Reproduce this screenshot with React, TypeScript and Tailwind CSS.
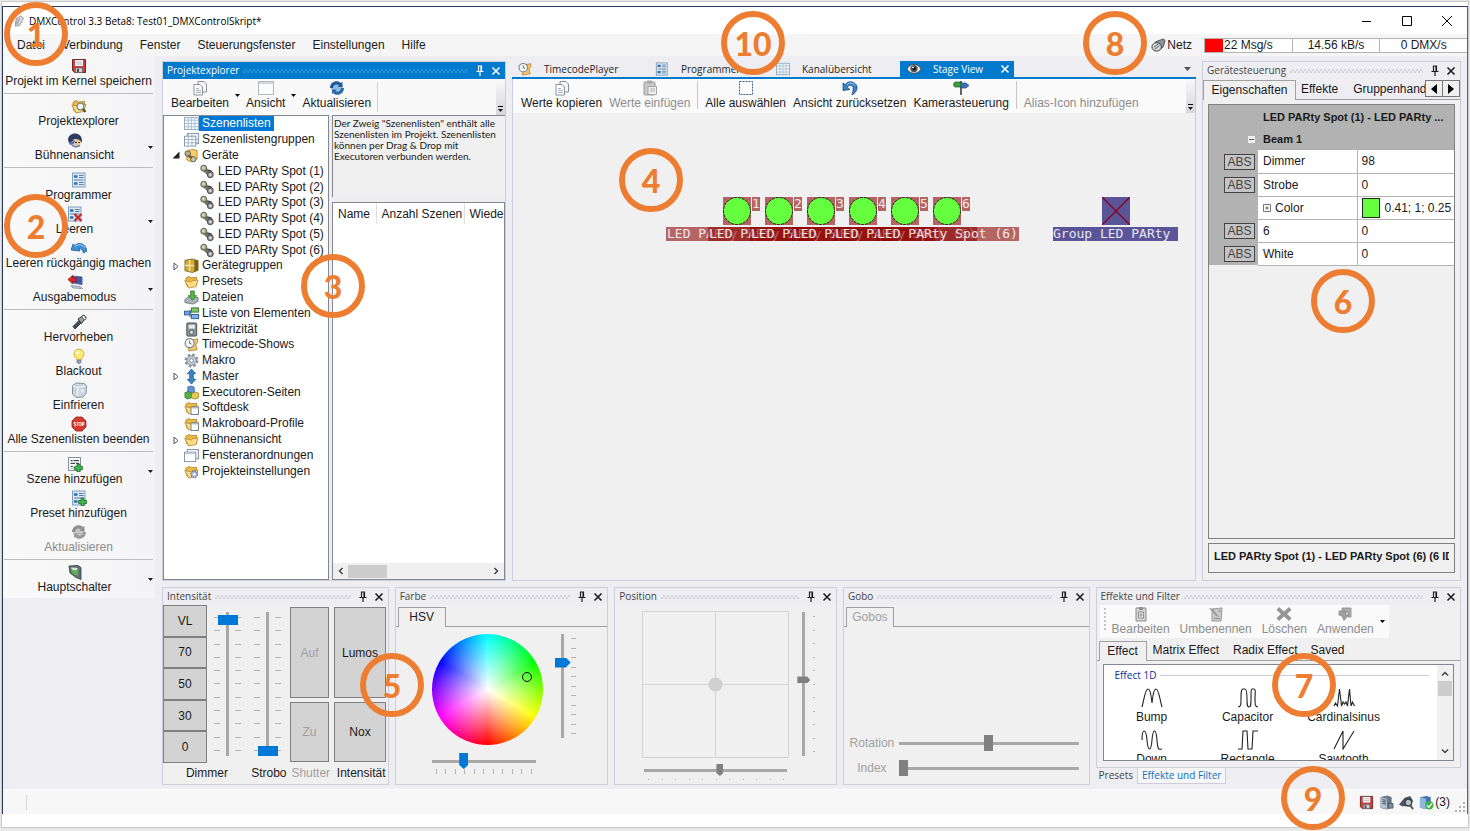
import React from "react";
import type { ReactNode } from "react";

const folder = (
  <>
    <path d="M2 4.500 5 2.500l2.500 1.500 6-.5v9l-9 1.500-2-2z" fill="#e9b949" stroke="#a87a1e" strokeWidth=".8" />
    <path d="m.8 7 7 1.500L9.500 7l5.500-.5-2.500 7-7.500 1.500z" fill="#fbdc86" stroke="#b3842a" strokeWidth=".8" />
  </>
);
const sheet = (
  <>
    <rect x="1.500" y="1.500" width="12" height="13" fill="#fafafa" stroke="#8a8f98" />
    <path d="M3.500 4.500h2M6.500 4.500H12M3.500 7.500H8M9 7.500h3M3.500 10.500H6" stroke="#3f4954" />
    <path d="M3.500 6H12M3.500 12.500H7" stroke="#9aa3ad" strokeWidth=".8" />
  </>
);
const blueSheet = (
  <>
    <rect x="1.500" y="1" width="12.500" height="14" fill="#d9e9f7" stroke="#7f9fbf" />
    <path d="M3 4.500h3.500M3 11.500h3.500" stroke="#2f6fb0" strokeWidth="2.500" />
    <path d="M8 3.500h4.500M8 5.500h4.500M8 10.500h4.500M8 12.500h4.500M3 8h9.500" stroke="#5b7fa6" />
  </>
);
const plus = <path d="M10 8h3v2.500h2.500v3H13V16h-3v-2.500H7.500v-3H10z" fill="#3fb54a" stroke="#1d7328" strokeWidth=".8" />;
const server = (
  <>
    <path d="M2 2.500 9 1l4 1.500v11L8 15l-6-1.500z" fill="#66788c" stroke="#46566a" strokeWidth=".6" />
    <path d="m2 2.500 6.500 1.500V15L2 13.500z" fill="#b3c0cd" />
    <path d="m3.500 5 4 .7M3.500 7l4 .7M3.500 9l4 .7" stroke="#39495a" />
    <path d="M10 9h5v5h-5z" fill="#7c8b99" stroke="#3d4954" strokeWidth=".7" />
  </>
);
const winBox = (
  <>
    <rect x="7.500" y="7.500" width="8" height="8" fill="#fff" stroke="#6f7f90" />
    <path d="M7.500 8.500h8" stroke="#9fb4c8" />
  </>
);

const ICONS: Record<string, ReactNode> = {
  save: (
    <>
      <path d="M1.500 1.500h13v13h-11l-2-2z" fill="#c9403c" stroke="#6e2626" />
      <rect x="4" y="2" width="8" height="6" fill="#f0f4f8" />
      <path d="M5 4h6M5 6h6" stroke="#b9c3cc" />
      <rect x="4.500" y="10" width="7" height="4.500" fill="#cfd6dc" stroke="#55606a" strokeWidth=".7" />
      <rect x="6" y="11" width="2" height="3" fill="#434c55" />
    </>
  ),
  folderSearch: (
    <>
      {folder}
      <circle cx="9.500" cy="8.500" r="3.300" fill="#eaf4fb" stroke="#7b8691" strokeWidth="1.200" />
      <path d="m12 11 2.500 3" stroke="#5c4a2a" strokeWidth="2" />
    </>
  ),
  stage: (
    <>
      <path d="M4 8c1-3 9-3 10 1l-1 5-6 1-3-2z" fill="#e8c69c" />
      <path d="M1 8c0-8 13-9 14 0v3c-2-4-5-4-8-4-1 2-3 4-5 4z" fill="#2f3d66" />
      <path d="M2 11c2 0 4-1 5-3l1 1c-1 3-3 4-5 4z" fill="#4f6fb4" />
      <path d="M8 10.500h2M11.500 10.500h1.500" stroke="#3c2f22" />
      <path d="m5 13.500 4 1.500 4-1.500" stroke="#6f83b5" strokeWidth="1.500" fill="none" />
    </>
  ),
  programmer: blueSheet,
  clear: (
    <>
      {blueSheet}
      <path d="m7.500 8 7 7M14.500 8l-7 7" stroke="#c62828" strokeWidth="2.200" />
    </>
  ),
  undo: (
    <>
      <path d="M0 10 2 4l2 1.500C8 1 15 4 16 11l-3.500 2c-1-3-2-4.500-4.500-4.500L9 11z" fill="#3f8fd6" stroke="#235f9c" strokeWidth=".8" />
      <path d="M4 6.500C8 3.500 12 4.500 14 8" stroke="#a9d3f5" fill="none" />
    </>
  ),
  output: (
    <>
      <path d="M5 2 15 3v7.500L6 9z" fill="#3859b8" stroke="#5b6880" />
      <path d="m4 11.500 9 1 2.500 2-9.500-.5z" fill="#c7cdd8" stroke="#717b8c" strokeWidth=".7" />
      <path d="m1 5.500 4.500-4V4h4v3.500h-4V10z" fill="#d9272e" stroke="#8b1016" strokeWidth=".7" />
    </>
  ),
  torch: (
    <>
      <path d="m2 12.500 6-6L10 9l-6 6z" fill="#4a4f55" stroke="#1e2124" strokeWidth=".8" />
      <path d="m7 5 6-4 2 2.500-4.500 6z" fill="#9aa2aa" stroke="#23272b" strokeWidth=".9" />
      <ellipse cx="13" cy="3.500" rx="1.500" ry="2.600" transform="rotate(-38 13 3.500)" fill="#edf1f4" stroke="#33383d" strokeWidth=".7" />
    </>
  ),
  bulb: (
    <>
      <path d="M8 1a5 5 0 0 0-3 9l1 2h4l1-2A5 5 0 0 0 8 1" fill="#ffe978" stroke="#c9a227" strokeWidth=".8" />
      <circle cx="6.500" cy="4.500" r="1.600" fill="#fffbe0" />
      <path d="M6 12h4v2.500l-1 1H7l-1-1z" fill="#9aa3ab" stroke="#6a7178" strokeWidth=".6" />
    </>
  ),
  ice: (
    <>
      <path d="m1.500 3.500 4-2.500 8 .5 2 2.500-.5 7.500-3 3.500-7 .500L1.500 12z" fill="#c9d6df" stroke="#7c8b97" strokeWidth=".9" />
      <path d="m2 4 5 1.500 7.500-1.500M7 5.500 6.500 14" stroke="#f4f8fa" fill="none" strokeWidth="1.200" />
      <path d="m9 8 3.500-1v4z" fill="#eef4f7" />
    </>
  ),
  stop: (
    <>
      <path d="M5 1h6l4 4v6l-4 4H5l-4-4V5z" fill="#d63a2f" stroke="#941f18" strokeWidth=".8" />
      <path d="M4.800 6.500H3v1.500h1.800v1.700H3M5.700 6.500h2M6.700 6.500v3.400M8.700 6.500h1.500v3H8.700zM11.500 10V6.500H13v2h-1.500" stroke="#fff" strokeWidth=".8" fill="none" />
    </>
  ),
  sceneAdd: <>{sheet}{plus}</>,
  presetAdd: <>{blueSheet}{plus}</>,
  refreshGray: (
    <>
      <circle cx="8" cy="8" r="6" fill="#c4c4c4" />
      <path d="M1 8c0-6 7-9 11-5l1.500-1V7H8.500L10 5.500C7 3.500 4.500 5 4 8z" fill="#8f8f8f" />
      <path d="M15 8c0 6-7 9-11 5l-1 1V9.500h5L6.500 11c2.500 1.500 5 .5 5.500-3z" fill="#9b9b9b" />
    </>
  ),
  refresh: (
    <>
      <circle cx="8" cy="8" r="6" fill="#8fc0e4" />
      <path d="M1 8c0-6 7-9 11-5l1.500-1V7H8.500L10 5.500C7 3.500 4.500 5 4 8z" fill="#1d5c99" />
      <path d="M15 8c0 6-7 9-11 5l-1 1V9.500h5L6.500 11c2.500 1.500 5 .5 5.500-3z" fill="#2a6cab" />
    </>
  ),
  mainSwitch: (
    <>
      <path d="m2 2 9-.5 3 2v12L9 13.500 3 9z" fill="#5f6f78" stroke="#333d44" strokeWidth=".8" />
      <path d="m4 3.500 7 .5v8L7 10.500 4.500 8z" fill="#5fae54" />
      <path d="m4 3.500 7 .5-2 2.500-4-1z" fill="#cfeec8" />
    </>
  ),
  copy: (
    <>
      <path d="M6 1.500h6l2.500 2.500v8H6z" fill="#f5f6f8" stroke="#8b929b" />
      <path d="M2 4.500h6l2.500 2.500v8H2z" fill="#fff" stroke="#8b929b" />
      <path d="M4 8.500h3M4 10.500h5M4 12.500h5" stroke="#a9b0b8" />
    </>
  ),
  window: (
    <>
      <rect x=".5" y="1.500" width="15" height="13" fill="#fcfcfd" stroke="#b3b9c0" />
      <path d="M1 3h14" stroke="#d3d8de" strokeWidth="2" />
    </>
  ),
  grid: (
    <>
      <rect x=".5" y="1.500" width="15" height="13" fill="#f3f8fc" stroke="#8fa8bd" />
      <path d="M1 4.500h14M1 8h14M1 11.500h14M4.500 2v12M8 2v12M11.500 2v12" stroke="#a9c1d5" />
    </>
  ),
  grids: (
    <>
      <rect x="3.500" y="1.500" width="12" height="11" fill="#f3f8fc" stroke="#8195a8" />
      <rect x=".5" y="4.500" width="12" height="10.500" fill="#fff" stroke="#8195a8" />
      <path d="M1 8h14M1 11.500h14M4.500 2v13M8.500 2v13M12.500 4v8" stroke="#9fb3c6" />
    </>
  ),
  devices: (
    <>
      <path d="M3 3.500 8 1.500l6 1v9l-8 3-3-2z" fill="#f4cf6c" stroke="#a87a1e" strokeWidth=".8" />
      <circle cx="4" cy="6" r="3" fill="#b9b093" stroke="#4c452c" strokeWidth=".8" />
      <path d="m5 7 6 3-2 3-5-4z" fill="#67654f" />
      <circle cx="10" cy="12" r="2.800" fill="#c9c4ac" stroke="#4c452c" strokeWidth=".8" />
    </>
  ),
  lamp: (
    <>
      <path d="m3 2 9 6-3 5-7-7z" fill="#77776b" />
      <circle cx="4" cy="4.500" r="3.200" fill="#b0ae96" stroke="#4d4c42" strokeWidth=".9" />
      <circle cx="3.500" cy="4" r="1.300" fill="#dedcc8" />
      <path d="M8 7c4-1 6 2 5 6" stroke="#3e4044" strokeWidth="1.300" fill="none" />
      <circle cx="11" cy="11.500" r="3.200" fill="#8f9194" stroke="#3c3e42" strokeWidth=".9" />
      <circle cx="11" cy="11.500" r="1.300" fill="#e2e3e4" />
    </>
  ),
  crate: (
    <>
      <path d="m1 2.500 8-1.500 6 2v10l-6 2.500-8-2z" fill="#d2ac3c" stroke="#6b5215" strokeWidth=".8" />
      <path d="m11 1.500 4 1.500v10l-4 2z" fill="#7f6218" />
      <path d="M6 2v12M1 8h10" stroke="#f6e29d" strokeWidth="1.500" />
    </>
  ),
  folder,
  files: (
    <>
      <path d="m1 10 4-3 10 1v4l-5 3-9-1.500z" fill="#aab4be" stroke="#5f6a75" strokeWidth=".8" />
      <path d="M7 1h4v5h2.500L9 11 4.500 6H7z" fill="#56b848" stroke="#2a7522" strokeWidth=".8" />
    </>
  ),
  list: (
    <>
      <path d="M5 7h3M6.500 4v8" stroke="#444" />
      <rect x=".5" y="5.500" width="6" height="4" fill="#6aa3df" stroke="#2b5f9e" />
      <rect x="8" y="2" width="7.500" height="4.500" fill="#7fc36a" stroke="#3b7f2b" />
      <rect x="8" y="9" width="7.500" height="4.500" fill="#7fb0e6" stroke="#2b5f9e" />
    </>
  ),
  meter: (
    <>
      <rect x="3" y="1" width="10.500" height="14" rx="1" fill="#8d9498" stroke="#454b4f" />
      <rect x="5" y="3" width="6.500" height="4" fill="#e8ecee" />
      <circle cx="8" cy="11" r="2.200" fill="#d9dee0" stroke="#3b4044" strokeWidth=".8" />
    </>
  ),
  clock: (
    <>
      <path d="M5 3.500 14.500 2v4l-2 1.500 1.500 6L5 15z" fill="#f0c76a" stroke="#a87a2a" strokeWidth=".8" />
      <circle cx="6" cy="6.500" r="4.800" fill="#f6f8fa" stroke="#80878f" strokeWidth="1.300" />
      <path d="M6 4v2.700l2 .8" stroke="#555" fill="none" />
    </>
  ),
  gear: (
    <>
      <circle cx="8" cy="8" r="6" fill="none" stroke="#8c97a2" strokeWidth="3" strokeDasharray="2.700 2" />
      <circle cx="8" cy="8" r="5" fill="#c5cdd5" stroke="#7d8893" />
      <circle cx="8" cy="8" r="2" fill="#fff" stroke="#7d8893" />
    </>
  ),
  master: <path d="m8 0 4.500 5H10v6h2.500L8 16l-4.500-5H6V5H3.500z" fill="#3c84c8" stroke="#1e568e" strokeWidth=".8" />,
  cubes: (
    <>
      <path d="m4 2 4-1 3 1.500V8L7 9 4 8z" fill="#5f96d8" stroke="#2b558c" strokeWidth=".7" />
      <path d="m1 8 4-1 3 1.500v5L4 15l-3-1.500z" fill="#58ad4d" stroke="#2a6b22" strokeWidth=".7" />
      <path d="m8 9 4-1.500 3.500 1v5L12 15l-4-1z" fill="#e6c84c" stroke="#8c7418" strokeWidth=".7" />
    </>
  ),
  folderWin: <>{folder}{winBox}</>,
  windows: (
    <>
      <rect x="3.500" y="1.500" width="12" height="10" fill="#eef2f6" stroke="#8290a0" />
      <rect x=".5" y="4.500" width="12" height="10" fill="#fff" stroke="#8290a0" />
      <path d="M1 5.500h11" stroke="#b9c8d8" strokeWidth="2" />
    </>
  ),
  folderGear: (
    <>
      {folder}
      <circle cx="11" cy="11" r="3.400" fill="#b9c4e0" stroke="#6575a5" strokeWidth="1.600" strokeDasharray="1.600 1" />
      <circle cx="11" cy="11" r="1.200" fill="#fff" />
    </>
  ),
  eye: (
    <>
      <path d="M0 8c3-7 13-7 16 0-3 6.500-13 6.500-16 0" fill="#efe9e2" stroke="#4a4440" strokeWidth=".9" />
      <circle cx="8" cy="7.500" r="4.200" fill="#4f5a60" />
      <circle cx="8" cy="7.500" r="2.200" fill="#101418" />
      <circle cx="6.800" cy="6.200" r="1" fill="#fff" />
    </>
  ),
  paste: (
    <>
      <rect x="2" y="2" width="11" height="13" rx="1" fill="#c9c9c9" stroke="#9b9b9b" />
      <rect x="5" y=".5" width="5" height="3" fill="#a9a9a9" />
      <path d="M6 6.500h8.500v8H6z" fill="#efefef" stroke="#a5a5a5" />
      <path d="M8 9h5M8 11h5" stroke="#b5b5b5" />
    </>
  ),
  select: <rect x="1.500" y="1.500" width="13" height="13" fill="#fcfcfc" stroke="#3f5f86" strokeDasharray="2 1" />,
  reset: (
    <>
      <path d="M10 15c5-3 7-8 3-11.500C9.500.5 5 1.500 3.500 4.500L1 3v7.500l7-1-2.500-2c1-3 5-3 5.500 0 .5 3-.5 5-1 7.500" fill="#3a80c4" stroke="#1c4f85" strokeWidth=".8" />
      <path d="M5 5c2-3 6-2.500 8 .5" stroke="#9ccbf0" fill="none" />
    </>
  ),
  camera: (
    <>
      <path d="M7 1h2v14H7z" fill="#5d666e" />
      <path d="M2 2h6v5H2L0 4.500z" fill="#3a9a3c" stroke="#1f6322" strokeWidth=".7" />
      <path d="M8 3h5l3 2.500L13 8H8z" fill="#3a72b8" stroke="#1f4a7e" strokeWidth=".7" />
    </>
  ),
  net: (
    <>
      <path d="m5 4 8-3 2 1.500-2 7-5 4z" fill="#8f949a" stroke="#33373b" strokeWidth=".8" />
      <ellipse cx="6" cy="9.500" rx="5" ry="4.500" fill="#d5d9dc" stroke="#3a3e42" />
      <path d="m3 10 5-4M4 12l5-4" stroke="#4d5256" />
    </>
  ),
  docEdit: (
    <>
      <path d="M3 2h10v13H3z" fill="#d4d4d4" stroke="#8f8f8f" />
      <path d="M6 1h4v3H6z" fill="#8f8f8f" />
      <path d="M5.500 6h5v6h-5zM8 7v4M6.500 9h3" stroke="#8f8f8f" fill="#ececec" />
    </>
  ),
  rename: (
    <>
      <path d="m4 3 10-1-1 13H4z" fill="#cbcbcb" stroke="#999" />
      <path d="m1 2 4 1 6 8-3-1z" fill="#9a9a9a" />
      <path d="M6 12.500h6M10 5h3" stroke="#8c8c8c" />
    </>
  ),
  remove: <path d="m3 1 5 4.500L13 1l2.500 3L11 8l4.500 4-2.500 3-5-4.500L3 15 .5 12 5 8 .5 4z" fill="#969696" />,
  apply: (
    <>
      <path d="M5 2h9v9h-3V6H5z" fill="#ababab" stroke="#8a8a8a" strokeWidth=".8" />
      <path d="M2 5h7v4h2.500L7 14.500 5 10 2 9z" fill="#a0a0a0" stroke="#8a8a8a" strokeWidth=".8" />
    </>
  ),
  server,
  search: (
    <>
      <path d="m0 10 6-7 6-2 3 5-3 6H3z" fill="#4d565e" />
      <circle cx="10" cy="8" r="3.500" fill="#b4bec6" stroke="#343b41" strokeWidth="1.300" />
      <path d="m12 11 3 4" stroke="#5a5348" strokeWidth="2" />
    </>
  ),
  serverOk: (
    <>
      <path d="m1 2.500 7-1.500 4.500 1.500v11L7 15l-6-1.500z" fill="#3f73ae" />
      <path d="m1 2.500 6.500 1.500V15L1 13.500z" fill="#8fb6dd" />
      <circle cx="11" cy="11" r="4.500" fill="#3fb04a" />
      <path d="m8.500 11 2 2 3.500-4" stroke="#fff" strokeWidth="1.400" fill="none" />
    </>
  ),
  app: (
    <>
      <path d="m4 5 6-4 4 3-5 10-6 1z" fill="#d8dade" stroke="#7b7f86" strokeWidth=".9" />
      <path d="m6 5-2 8M9 4 6 13" stroke="#8b8f96" />
    </>
  ),
};

function Icon({ name, size = 16 }: { name: string; size?: number }) {
  return (
    <svg viewBox="0 0 16 16" width={size} height={size} aria-hidden="true" className="shrink-0">
      {ICONS[name]}
    </svg>
  );
}

const Caret = ({ className = "" }: { className?: string }) => (
  <svg viewBox="0 0 5 3" width="5" height="3" aria-hidden="true" className={"shrink-0 " + className}>
    <path d="M0 0h5L2.500 3z" fill="currentColor" />
  </svg>
);

const CloseGlyph = () => (
  <svg viewBox="0 0 10 10" width="10" height="10" aria-hidden="true">
    <path d="m1.500 1.500 7 7m0-7-7 7" stroke="currentColor" strokeWidth="1.600" />
  </svg>
);

const PinGlyph = () => (
  <svg viewBox="0 0 8 11" width="8" height="11" aria-hidden="true">
    <path d="M2.500 6V1h3v5M.5 6.500h7M4 7v4M5 1v5" stroke="currentColor" strokeWidth="1.200" fill="none" />
  </svg>
);

const segoe = "font-['Open_Sans','Noto_Sans',sans-serif]";

function PanelTitle({ title, active = false }: { title: string; active?: boolean }) {
  return (
    <header className={"flex h-[17px] shrink-0 items-center gap-1 pl-1 pr-1 " + (active ? "bg-[#007acc] text-white" : "text-[#444]")}>
      <h2 className={"whitespace-nowrap text-[10px] leading-[15px] " + segoe}>{title}</h2>
      <span
        className={
          "h-[4px] flex-1 bg-[length:4px_4px] " +
          (active
            ? "bg-[repeating-conic-gradient(#2b93d8_0_25%,transparent_0_50%)]"
            : "bg-[repeating-conic-gradient(#d3d3da_0_25%,transparent_0_50%)]")
        }
      />
      <button aria-label={title + " anheften"} className={"ml-1 " + (active ? "text-white" : "text-[#1e1e1e]")}>
        <PinGlyph />
      </button>
      <button aria-label={title + " schließen"} className={"ml-[3px] " + (active ? "text-white" : "text-[#1e1e1e]")}>
        <CloseGlyph />
      </button>
    </header>
  );
}

function Panel({ title, active, children }: { title: string; active?: boolean; children: ReactNode }) {
  return (
    <section className="flex min-h-0 min-w-0 flex-1 flex-col overflow-hidden border border-[#ccced9] bg-[#eeeef2]">
      <PanelTitle title={title} active={active} />
      {children}
    </section>
  );
}

type SideEntry = { icon: string; label: string; menu?: boolean; disabled?: boolean };
const SIDE: SideEntry[][] = [
  [{ icon: "save", label: "Projekt im Kernel speichern" }],
  [
    { icon: "folderSearch", label: "Projektexplorer" },
    { icon: "stage", label: "Bühnenansicht", menu: true },
  ],
  [
    { icon: "programmer", label: "Programmer" },
    { icon: "clear", label: "Leeren", menu: true },
    { icon: "undo", label: "Leeren rückgängig machen" },
    { icon: "output", label: "Ausgabemodus", menu: true },
  ],
  [
    { icon: "torch", label: "Hervorheben" },
    { icon: "bulb", label: "Blackout" },
    { icon: "ice", label: "Einfrieren" },
    { icon: "stop", label: "Alle Szenenlisten beenden" },
  ],
  [
    { icon: "sceneAdd", label: "Szene hinzufügen", menu: true },
    { icon: "presetAdd", label: "Preset hinzufügen" },
    { icon: "refreshGray", label: "Aktualisieren", disabled: true },
  ],
  [{ icon: "mainSwitch", label: "Hauptschalter", menu: true }],
];

function SideBar() {
  return (
    <nav className="w-[152px] shrink-0">
      <div className="bg-gradient-to-r from-[#f9f9f9] to-[#f4f4f6] pl-px pr-[2px] pb-[2px]">
        {SIDE.map((group, g) => (
          <div key={g} className={g > 0 ? "mt-[3px] border-t border-[#bcbcc2] pt-[2px]" : ""}>
            {group.map((e) => (
              <button key={e.label} disabled={e.disabled} className={"flex h-[34px] w-full items-center " + (e.disabled ? "text-[#8c8c8c]" : "")}>
                <span className="flex flex-1 flex-col items-center whitespace-nowrap leading-[14px]">
                  <Icon name={e.icon} />
                  {e.label}
                </span>
                {e.menu && <Caret className="ml-[3px]" />}
              </button>
            ))}
          </div>
        ))}
      </div>
    </nav>
  );
}

function ToolButton({ icon, label, disabled, menu }: { icon?: string; label: string; disabled?: boolean; menu?: boolean }) {
  return (
    <button disabled={disabled} className={"flex h-[30px] items-center gap-[6px] whitespace-nowrap " + (disabled ? "text-[#8c8c8c]" : "")}>
      <span className="flex h-full flex-col items-center justify-end leading-[14px]">
        {icon && <Icon name={icon} />}
        {label}
      </span>
      {menu && <Caret className="text-black" />}
    </button>
  );
}

function Overflow() {
  return (
    <button aria-label="Weitere Optionen" className="ml-auto flex w-[9px] shrink-0 flex-col items-center justify-end gap-[2px] self-stretch bg-gradient-to-b from-[#f9f9f9] to-[#d5d5dc] pb-[3px]">
      <span className="h-px w-[5px] bg-black" />
      <Caret />
    </button>
  );
}

const TREE: { icon: string; label: string; lvl?: boolean; mark?: "open" | "closed"; sel?: boolean }[] = [
  { icon: "grid", label: "Szenenlisten", sel: true },
  { icon: "grids", label: "Szenenlistengruppen" },
  { icon: "devices", label: "Geräte", mark: "open" },
  { icon: "lamp", label: "LED PARty Spot (1)", lvl: true },
  { icon: "lamp", label: "LED PARty Spot (2)", lvl: true },
  { icon: "lamp", label: "LED PARty Spot (3)", lvl: true },
  { icon: "lamp", label: "LED PARty Spot (4)", lvl: true },
  { icon: "lamp", label: "LED PARty Spot (5)", lvl: true },
  { icon: "lamp", label: "LED PARty Spot (6)", lvl: true },
  { icon: "crate", label: "Gerätegruppen", mark: "closed" },
  { icon: "folder", label: "Presets" },
  { icon: "files", label: "Dateien" },
  { icon: "list", label: "Liste von Elementen" },
  { icon: "meter", label: "Elektrizität" },
  { icon: "clock", label: "Timecode-Shows" },
  { icon: "gear", label: "Makro" },
  { icon: "master", label: "Master", mark: "closed" },
  { icon: "cubes", label: "Executoren-Seiten" },
  { icon: "folderWin", label: "Softdesk" },
  { icon: "folderWin", label: "Makroboard-Profile" },
  { icon: "folder", label: "Bühnenansicht", mark: "closed" },
  { icon: "windows", label: "Fensteranordnungen" },
  { icon: "folderGear", label: "Projekteinstellungen" },
];

function Explorer() {
  return (
    <div className="flex w-[344px] shrink-0">
      <Panel title="Projektexplorer" active>
        <div className="flex h-[36px] shrink-0 bg-[#f9f9f9] pl-[8px]">
          <div className="flex items-start gap-[6px] pt-px">
            <ToolButton icon="copy" label="Bearbeiten" menu />
            <ToolButton icon="window" label="Ansicht" menu />
            <ToolButton icon="refresh" label="Aktualisieren" />
            <span className="mt-[2px] h-[30px] w-px bg-[#d0d0d4]" />
          </div>
          <Overflow />
        </div>
        <div className="flex min-h-0 flex-1 gap-[3px]">
          <div className="w-[166px] shrink-0 overflow-hidden border border-[#828790] bg-white">
            <ul role="tree" className="grid h-[363px] auto-rows-fr">
              {TREE.map((t) => (
                <li key={t.label} role="treeitem" aria-selected={!!t.sel} className={"flex items-center whitespace-nowrap leading-[15px] " + (t.lvl ? "pl-[36px]" : "pl-[8px]")}>
                  {!t.lvl && (
                    <svg viewBox="0 0 8 8" width="8" height="8" aria-hidden="true" className="mr-[4px] shrink-0">
                      {t.mark === "open" && <path d="M7.500.5v7H.5z" fill="#222" />}
                      {t.mark === "closed" && <path d="M2 1v7l4-3.500z" fill="#fff" stroke="#555" />}
                    </svg>
                  )}
                  <Icon name={t.icon} size={15} />
                  <span className={"px-[3px] " + (t.sel ? "bg-[#0078d7] text-white" : "")}>{t.label}</span>
                </li>
              ))}
            </ul>
          </div>
          <div className="flex min-w-0 flex-1 flex-col gap-[5px]">
            <p className="h-[82px] shrink-0 overflow-hidden border-l border-t border-[#828790] bg-[#f0f0f0] pl-px pt-[2px] font-['Lato',sans-serif] text-[10px] leading-[11px]">
              Der Zweig "Szenenlisten" enthält alle Szenenlisten im Projekt. Szenenlisten können per Drag &amp; Drop mit Executoren verbunden werden.
            </p>
            <div className="flex min-h-0 flex-1 flex-col border border-[#828790] bg-white">
              <div className="flex-1 overflow-hidden">
                <table className="w-[220px] table-fixed text-left">
                  <thead>
                    <tr className="h-[21px]">
                      <th scope="col" className="w-[43px] border-r border-[#e0e0e0] pl-[5px] font-normal">Name</th>
                      <th scope="col" className="w-[88px] whitespace-nowrap border-r border-[#e0e0e0] pl-[5px] font-normal">Anzahl Szenen</th>
                      <th scope="col" className="whitespace-nowrap pl-[5px] font-normal">Wiederholungen</th>
                    </tr>
                  </thead>
                  <tbody />
                </table>
              </div>
              <div className="flex h-[16px] items-center bg-[#f0f0f0] px-[4px] text-[#444]">
                <svg viewBox="0 0 8 8" width="8" height="8" aria-hidden="true"><path d="M5.500 1 2.500 4l3 3" stroke="currentColor" strokeWidth="1.500" fill="none" /></svg>
                <span className="ml-[3px] h-[13px] w-[39px] bg-[#cdcdcd]" />
                <svg viewBox="0 0 8 8" width="8" height="8" aria-hidden="true" className="ml-auto"><path d="m2.500 1 3 3-3 3" stroke="currentColor" strokeWidth="1.500" fill="none" /></svg>
              </div>
            </div>
          </div>
        </div>
      </Panel>
    </div>
  );
}

const NODE_LABEL = "absolute whitespace-pre font-['DejaVu_Sans_Mono',monospace] text-[13px] leading-[14px] text-white/85 ";
const SPOTS = [
  ["left-[210px]", "left-[153px]"],
  ["left-[252px]", "left-[195px]"],
  ["left-[294px]", "left-[237px]"],
  ["left-[336px]", "left-[279px]"],
  ["left-[378px]", "left-[321px]"],
  ["left-[420px]", "left-[363px]"],
];

function StageView() {
  return (
    <section className="flex min-w-0 flex-1 flex-col">
      <div className={"flex h-[18px] shrink-0 items-stretch border-b-2 border-[#007acc] text-[10px] text-[#1e1e1e] " + segoe}>
        <button className="flex w-[137px] items-center gap-[12px] whitespace-nowrap pl-[6px]"><Icon name="clock" size={14} />TimecodePlayer</button>
        <button className="flex w-[121px] items-center gap-[12px] whitespace-nowrap pl-[6px]"><Icon name="programmer" size={14} />Programmer</button>
        <button className="flex w-[130px] items-center gap-[12px] whitespace-nowrap pl-[6px]"><Icon name="grid" size={14} />Kanalübersicht</button>
        <div className="flex w-[114px] items-center bg-[#007acc] pl-[7px] pr-[4px] text-white">
          <button className="flex items-center gap-[12px] whitespace-nowrap"><Icon name="eye" size={14} />Stage View</button>
          <button aria-label="Stage View schließen" className="ml-auto"><CloseGlyph /></button>
        </div>
        <button aria-label="Fensterliste" className="ml-auto mr-[5px] text-[#555]">
          <svg viewBox="0 0 7 4" width="7" height="4" aria-hidden="true"><path d="M0 0h7L3.500 4z" fill="currentColor" /></svg>
        </button>
      </div>
      <div className="flex min-h-0 flex-1 flex-col border border-t-0 border-[#ccced9] bg-[#f0f0f0]">
        <div className="flex h-[34px] shrink-0 bg-[#fafafa] pl-[8px]">
          <div className="flex min-w-0 items-start gap-[7px] pt-px">
            <ToolButton icon="copy" label="Werte kopieren" />
            <ToolButton icon="paste" label="Werte einfügen" disabled />
            <span className="mt-px h-[28px] w-px bg-[#c8c8cc]" />
            <ToolButton icon="select" label="Alle auswählen" />
            <ToolButton icon="reset" label="Ansicht zurücksetzen" />
            <ToolButton icon="camera" label="Kamerasteuerung" />
            <span className="mt-px h-[28px] w-px bg-[#c8c8cc]" />
            <ToolButton label="Alias-Icon hinzufügen" disabled />
          </div>
          <Overflow />
        </div>
        <div className="relative min-h-0 flex-1 overflow-hidden">
          {SPOTS.map(([box, label], i) => (
            <React.Fragment key={box}>
              <div className={"absolute top-[84px] flex gap-px " + box}>
                <svg viewBox="0 0 28 28" width="28" height="28" aria-hidden="true">
                  <path d="M0 0h28v28H0z" fill="#b56464" />
                  <circle cx="14" cy="14" r="13.500" fill="#66ff3f" stroke="#222" strokeDasharray="3 1" />
                </svg>
                <span className="h-[14px] w-[8px] bg-[#b56464] text-center font-['DejaVu_Sans_Mono',monospace] text-[13px] leading-[14px] text-white/85">{i + 1}</span>
              </div>
              <span className={NODE_LABEL + "top-[114px] bg-[rgba(139,0,0,0.58)] px-px " + label}>LED PARty Spot ({i + 1})</span>
            </React.Fragment>
          ))}
          <svg viewBox="0 0 28 28" width="28" height="28" aria-hidden="true" className="absolute left-[589px] top-[84px]">
            <path d="M0 0h28v28H0z" fill="#5a5599" />
            <path d="m0 0 28 28M28 0 0 28" stroke="#8b0018" strokeWidth="1.300" />
          </svg>
          <span className={NODE_LABEL + "left-[540px] top-[114px] bg-[#5a5599]"}>{"Group LED PARty "}</span>
        </div>
      </div>
    </section>
  );
}

const PROPS: { name: string; value: string; abs?: boolean; color?: boolean }[] = [
  { name: "Dimmer", value: "98", abs: true },
  { name: "Strobe", value: "0", abs: true },
  { name: "Color", value: "0.41; 1; 0.25", color: true },
  { name: "6", value: "0", abs: true },
  { name: "White", value: "0", abs: true },
];

function DeviceControl() {
  return (
    <div className="flex w-[259px] shrink-0">
      <Panel title="Gerätesteuerung">
        <div className="flex h-[21px] shrink-0 items-end" role="tablist">
          <button role="tab" aria-selected="true" className="h-[20px] w-[93px] border-l border-r border-t border-[#a0a0a0] bg-[#f0f0f0] leading-[17px]">Eigenschaften</button>
          <div className="flex h-[20px] min-w-0 flex-1 items-start border-b border-[#a0a0a0]">
            <button role="tab" className="shrink-0 px-[5px] leading-[18px]">Effekte</button>
            <button role="tab" className="ml-[10px] min-w-0 flex-1 overflow-hidden whitespace-nowrap text-left leading-[18px]">Gruppenhandling</button>
            <button aria-label="Zurück" className="flex h-[17px] w-[18px] items-center justify-center border border-[#777] bg-[#f0f0f0]">
              <svg viewBox="0 0 6 10" width="6" height="10" aria-hidden="true"><path d="M6 0v10L0 5z" /></svg>
            </button>
            <button aria-label="Weiter" className="flex h-[17px] w-[17px] items-center justify-center border border-l-0 border-[#777] bg-[#f0f0f0]">
              <svg viewBox="0 0 6 10" width="6" height="10" aria-hidden="true"><path d="M0 0v10l6-5z" /></svg>
            </button>
          </div>
        </div>
        <div className="flex min-h-0 flex-1 flex-col gap-[4px] bg-[#f0f0f0] px-[5px] pb-[7px] pt-[4px]">
          <div className="min-h-0 flex-1 border border-[#808080]">
            <table className="w-full table-fixed border-collapse">
              <colgroup>
                <col className="w-[49px]" />
                <col className="w-[99px]" />
                <col />
              </colgroup>
              <thead className="bg-[#b2b2b2] text-left">
                <tr className="h-[23px]">
                  <td />
                  <th colSpan={2} className="whitespace-nowrap pl-[5px] text-[11px]">LED PARty Spot (1) - LED PARty ...</th>
                </tr>
                <tr className="h-[22px]">
                  <td className="pr-[3px]">
                    <button aria-label="Beam 1 einklappen" className="ml-auto flex size-[7px] items-center justify-center bg-[#eee]"><span className="h-px w-[5px] bg-[#666]" /></button>
                  </td>
                  <th colSpan={2} className="pl-[5px] text-[11px]">Beam 1</th>
                </tr>
              </thead>
              <tbody>
                {PROPS.map((p) => (
                  <tr key={p.name} className="h-[23px]">
                    <td className="bg-[#b2b2b2] pr-[3px]">
                      {p.abs && <button className="ml-auto block h-[16px] w-[31px] border border-[#444] bg-[#c4c4c4] text-center leading-[14px] text-[#444]">ABS</button>}
                    </td>
                    <td className="border-b border-r border-[#b5b5b5] bg-white pl-[5px]">
                      <span className="flex items-center gap-[4px]">
                        {p.color && <button aria-label="Color aufklappen" className="size-[8px]"><svg viewBox="0 0 8 8" width="8" height="8"><path d="M.5.5h7v7h-7zM2 4h4M4 2v4" fill="none" stroke="#777" /></svg></button>}
                        {p.name}
                      </span>
                    </td>
                    <td className="whitespace-nowrap border-b border-[#b5b5b5] bg-white pl-[4px]">
                      <span className="flex items-center gap-[5px]">
                        {p.color && <span className="h-[20px] w-[18px] border border-[#222] bg-[#66ff3f]" />}
                        {p.value}
                      </span>
                    </td>
                  </tr>
                ))}
              </tbody>
            </table>
          </div>
          <div className="h-[30px] shrink-0 border border-[#808080] px-[5px] text-[11px] font-bold leading-[24px]">
            <div className="overflow-hidden whitespace-nowrap">LED PARty Spot (1) - LED PARty Spot (6) (6 IDs)</div>
          </div>
        </div>
      </Panel>
    </div>
  );
}

const RANGE = "m-0 block appearance-none bg-center bg-no-repeat [&::-webkit-slider-thumb]:appearance-none ";
const VERT = RANGE + "[writing-mode:vertical-lr] [direction:rtl] bg-[linear-gradient(#a8a8a8,#a8a8a8)] bg-[length:3px_100%] ";
const HORZ = RANGE + "bg-[linear-gradient(#a8a8a8,#a8a8a8)] bg-[length:100%_3px] ";

const Ticks = ({ className }: { className: string }) => (
  <div aria-hidden="true" className={"flex justify-between " + className}>
    {Array.from({ length: 11 }, (_, i) => (
      <span key={i} className="min-h-px min-w-px bg-[#b4b4b4]" />
    ))}
  </div>
);

function Fader({ id, value }: { id: string; value: number }) {
  return (
    <div className="grid h-[144px] w-[27px] justify-items-center">
      <div className="flex w-full justify-between py-[5px] [grid-area:1/1]">
        <Ticks className="w-[6px] flex-col" />
        <Ticks className="w-[6px] flex-col" />
      </div>
      <input
        id={id}
        type="range"
        defaultValue={value}
        className={VERT + "h-[144px] w-[20px] [grid-area:1/1] [&::-webkit-slider-thumb]:h-[10px] [&::-webkit-slider-thumb]:w-[20px] [&::-webkit-slider-thumb]:bg-[#0078d7]"}
      />
    </div>
  );
}

const PAD_BUTTON = "border border-[#808080] bg-[#d3d3d3] ";

function Intensity() {
  return (
    <Panel title="Intensität">
      <div className="flex-1 bg-[#f0f0f0]">
        <div className="flex h-[158px]">
          <div className="flex w-[44px] flex-col">
            {["VL", "70", "50", "30", "0"].map((l) => (
              <button key={l} className={PAD_BUTTON + "flex-1"}>{l}</button>
            ))}
          </div>
          <div className="ml-[7px] mt-[7px] flex gap-[13px]">
            <Fader id="dimmer" value={98} />
            <Fader id="strobo" value={0} />
          </div>
          <div className="ml-[9px] flex w-[39px] flex-col gap-[4px] pb-px pt-[2px] text-[#a0a0a0]">
            <button disabled className={PAD_BUTTON + "h-[91px]"}>Auf</button>
            <button disabled className={PAD_BUTTON + "flex-1"}>Zu</button>
          </div>
          <div className="ml-[5px] flex w-[52px] flex-col gap-[4px] pb-px pt-[2px]">
            <button className={PAD_BUTTON + "h-[91px]"}>Lumos</button>
            <button className={PAD_BUTTON + "flex-1"}>Nox</button>
          </div>
        </div>
        <div className="mt-[3px] flex text-center leading-[14px]">
          <label htmlFor="dimmer" className="w-[88px]">Dimmer</label>
          <label htmlFor="strobo" className="w-[36px]">Strobo</label>
          <span className="w-[48px] text-[#a0a0a0]">Shutter</span>
          <span className="w-[53px]">Intensität</span>
        </div>
      </div>
    </Panel>
  );
}

function SingleTab({ label, disabled }: { label: string; disabled?: boolean }) {
  return (
    <div className="flex h-[22px] shrink-0 items-end" role="tablist">
      <span className="w-[2px] self-stretch border-b border-[#a0a0a0]" />
      <button role="tab" aria-selected="true" disabled={disabled} className={"h-[20px] w-[48px] border-l border-r border-t border-[#a0a0a0] leading-[17px] " + (disabled ? "text-[#a0a0a0]" : "")}>{label}</button>
      <span className="flex-1 self-stretch border-b border-[#a0a0a0]" />
    </div>
  );
}

function ColorPanel() {
  return (
    <Panel title="Farbe">
      <div className="flex flex-1 flex-col bg-[#f0f0f0]">
        <SingleTab label="HSV" />
        <div className="flex pl-[36px] pt-[6px]">
          <div className="flex flex-col">
            <div className="relative mt-px size-[111px] rounded-full bg-[radial-gradient(circle,white_0,rgba(255,255,255,0)_70%),conic-gradient(#0ff_0deg,#0f0_60deg,#ff0_120deg,#f00_180deg,#f0f_240deg,#00f_300deg,#0ff_360deg)]">
              <span className="absolute left-[90px] top-[38px] size-[10px] rounded-full border border-black" />
            </div>
            <input
              type="range"
              aria-label="Sättigung"
              defaultValue={29}
              className={HORZ + "mt-[8px] h-[16px] w-[104px] [&::-webkit-slider-thumb]:h-[16px] [&::-webkit-slider-thumb]:w-[9px] [&::-webkit-slider-thumb]:bg-[#0078d7] [&::-webkit-slider-thumb]:[clip-path:polygon(0_0,100%_0,100%_75%,50%_100%,0_75%)]"}
            />
            <Ticks className="ml-[4px] h-[5px] w-[96px]" />
          </div>
          <div className="ml-[12px] mt-px flex h-[104px]">
            <input
              type="range"
              aria-label="Helligkeit"
              defaultValue={75}
              className={VERT + "h-[104px] w-[16px] [&::-webkit-slider-thumb]:h-[10px] [&::-webkit-slider-thumb]:w-[16px] [&::-webkit-slider-thumb]:bg-[#0078d7] [&::-webkit-slider-thumb]:[clip-path:polygon(0_0,70%_0,100%_50%,70%_100%,0_100%)]"}
            />
            <Ticks className="my-[4px] w-[5px] flex-col" />
          </div>
        </div>
      </div>
    </Panel>
  );
}

function PositionPanel() {
  return (
    <Panel title="Position">
      <div className="flex flex-1 gap-[8px] bg-[#f0f0f0] pl-[27px] pt-[6px]">
        <div>
          <svg viewBox="0 0 147 147" width="147" height="147" role="img" aria-label="Position XY">
            <path d="M.5.5h146v146H.5zM73.500 0v147M0 73.500h147" fill="none" stroke="#d3d3d3" />
            <circle cx="73.500" cy="73.500" r="7" fill="#d0d0d0" />
          </svg>
          <input
            type="range"
            aria-label="Pan"
            disabled
            defaultValue={53}
            className={HORZ + "ml-[2px] mt-[6px] h-[12px] w-[143px] [&::-webkit-slider-thumb]:h-[12px] [&::-webkit-slider-thumb]:w-[7px] [&::-webkit-slider-thumb]:bg-[#808080] [&::-webkit-slider-thumb]:[clip-path:polygon(0_0,100%_0,100%_75%,50%_100%,0_75%)]"}
          />
          <Ticks className="ml-[6px] mt-[3px] h-px w-[136px]" />
        </div>
        <div className="mt-px flex h-[144px] gap-[3px]">
          <input
            type="range"
            aria-label="Tilt"
            disabled
            defaultValue={53}
            className={VERT + "h-[144px] w-[13px] [&::-webkit-slider-thumb]:h-[7px] [&::-webkit-slider-thumb]:w-[13px] [&::-webkit-slider-thumb]:bg-[#808080] [&::-webkit-slider-thumb]:[clip-path:polygon(0_0,75%_0,100%_50%,75%_100%,0_100%)]"}
          />
          <Ticks className="my-[4px] w-[2px] flex-col" />
        </div>
      </div>
    </Panel>
  );
}

const GOBO_RANGE = "h-[16px] min-w-0 flex-1 [&::-webkit-slider-thumb]:h-[16px] [&::-webkit-slider-thumb]:w-[9px] [&::-webkit-slider-thumb]:bg-[#808080]";

function GoboPanel() {
  return (
    <Panel title="Gobo">
      <div className="flex flex-1 flex-col bg-[#f0f0f0]">
        <SingleTab label="Gobos" disabled />
        <div className="mt-auto flex flex-col gap-[9px] pb-[8px] pl-[1px] pr-[10px] text-[#a0a0a0]">
          <div className="flex items-center">
            <label htmlFor="rotation" className="w-[54px] text-center">Rotation</label>
            <input id="rotation" type="range" disabled defaultValue={50} className={HORZ + GOBO_RANGE} />
          </div>
          <div className="flex items-center">
            <label htmlFor="index" className="w-[54px] text-center">Index</label>
            <input id="index" type="range" disabled defaultValue={0} className={HORZ + GOBO_RANGE} />
          </div>
        </div>
      </div>
    </Panel>
  );
}

const WAVES = [
  { label: "Bump", d: "M2 19C4 12 5 1 8 1s3.500 11 4 14C12.500 12 13 1 16 1s4 12 6 18" },
  { label: "Capacitor", d: "M2 19c3 0 3-3 3-8s0-10 2-10h2c2 0 2 5 2 10s0 8 2 8 2-3 2-8 0-10 1-10h2c2 0 1 5 1 10s0 8 3 8" },
  { label: "Cardinalsinus", d: "m2 18 1.500-3 2 3 2-17 2 17 1.500-4 1.500 2 1.500-2 1.500 4 2-17 1.500 17 1.500-4 2 4" },
  { label: "Down", d: "M2 10c0-12 4-12 5 0s4 12 5 0 4-12 5 0 2 9 5 9" },
  { label: "Rectangle", d: "M2 19h4L7 1h4l1 18h4L17 1h5" },
  { label: "Sawtooth", d: "M2 19 11 1v18L22 1" },
];

function Effects() {
  return (
    <div className="flex min-w-0 flex-col">
      <Panel title="Effekte und Filter">
        <div className="flex flex-1 flex-col bg-[#f0f0f0]">
          <div className="flex">
            <div className="ml-[3px] flex h-[33px] items-start gap-[10px] bg-[#fafafa] pr-[4px] pt-px">
              <span className="ml-[4px] mt-[2px] -mr-[4px] h-[24px] w-[2px] bg-[repeating-linear-gradient(#c4c4c4_0_2px,transparent_2px_4px)]" />
              <ToolButton icon="docEdit" label="Bearbeiten" disabled />
              <ToolButton icon="rename" label="Umbenennen" disabled />
              <ToolButton icon="remove" label="Löschen" disabled />
              <ToolButton icon="apply" label="Anwenden" disabled menu />
            </div>
          </div>
          <div className="mt-[3px] flex h-[20px] shrink-0" role="tablist">
            <span className="w-[2px] border-b border-[#a0a0a0]" />
            <button role="tab" aria-selected="true" className="w-[48px] border-l border-r border-t border-[#a0a0a0] leading-[17px]">Effect</button>
            <div className="flex flex-1 border-b border-[#a0a0a0] pl-[6px] leading-[19px]">
              <button role="tab">Matrix Effect</button>
              <button role="tab" className="ml-[14px]">Radix Effect</button>
              <button role="tab" className="ml-[13px]">Saved</button>
            </div>
          </div>
          <div className="mx-[6px] mb-[6px] mt-[3px] flex h-[97px] overflow-hidden border border-[#828790] bg-white">
            <div className="min-w-0 flex-1 overflow-hidden">
              <h3 className={"flex h-[20px] items-center gap-[4px] pl-[11px] pr-[8px] text-[10px] text-[#003399] " + segoe}>
                Effect 1D
                <span className="h-px flex-1 bg-[#c8ccd4]" />
              </h3>
              <ul className="grid w-[288px] grid-cols-3">
                {WAVES.map((w) => (
                  <li key={w.label} className="flex h-[42px] flex-col items-center pt-[3px]">
                    <svg viewBox="0 0 24 20" width="24" height="20" aria-hidden="true">
                      <path d={w.d} fill="none" stroke="#222" strokeWidth="1.100" />
                    </svg>
                    <span className="mt-[2px] leading-[14px]">{w.label}</span>
                  </li>
                ))}
              </ul>
            </div>
            <div className="flex w-[16px] flex-col items-center bg-[#f0f0f0] py-[5px] text-[#444]">
              <svg viewBox="0 0 8 8" width="8" height="8" aria-hidden="true"><path d="m1 5.500 3-3 3 3" stroke="currentColor" strokeWidth="1.500" fill="none" /></svg>
              <span className="mt-[3px] h-[15px] w-[14px] bg-[#cdcdcd]" />
              <svg viewBox="0 0 8 8" width="8" height="8" aria-hidden="true" className="mt-auto"><path d="m1 2.500 3 3 3-3" stroke="currentColor" strokeWidth="1.500" fill="none" /></svg>
            </div>
          </div>
        </div>
      </Panel>
      <div className={"flex h-[17px] shrink-0 items-start text-[10px] leading-[15px] text-[#444] " + segoe}>
        <button className="pl-[3px] pr-[4px]">Presets</button>
        <button className="border border-t-0 border-[#ccced9] bg-[#f6f6f8] px-[4px] text-[#0e70c0]">Effekte und Filter</button>
      </div>
    </div>
  );
}

const CALLOUTS: [string, string][] = [
  ["1", "left-[4px] top-[2px]"],
  ["2", "left-[4px] top-[194px]"],
  ["3", "left-[301px] top-[254px]"],
  ["4", "left-[619px] top-[148px]"],
  ["5", "left-[360px] top-[653px]"],
  ["6", "right-[95px] top-[269px]"],
  ["7", "right-[134px] top-[653px]"],
  ["8", "right-[323px] top-[11px]"],
  ["9", "right-[125px] top-[766px]"],
  ["10", "left-[721px] top-[11px]"],
];

export default function App() {
  return (
    <div className="relative flex min-h-screen flex-col bg-[#e8e8e8] px-px pb-[3px] pt-px font-['Liberation_Sans',Arial,sans-serif] text-[12px] leading-[14px] text-[#1a1a1a]">
      <div className="flex flex-1 flex-col border border-[#cacaca] bg-white pb-[13px] pt-[4px]">
        <div className="flex flex-1 flex-col border-l border-r border-t border-[#2b3a67] border-r-[#4a62a8] bg-[#eeeef2]">
          <header className="flex h-[27px] items-center bg-white pl-[10px]">
            <Icon name="app" size={12} />
            <h1 className={"ml-[4px] text-[10px] text-black " + segoe}>DMXControl 3.3 Beta8: Test01_DMXControlSkript*</h1>
            <div className="ml-auto flex items-center gap-[30px] pr-[15px] text-black">
              <button aria-label="Minimieren"><svg viewBox="0 0 10 10" width="10" height="10"><path d="M0 5.500h9" stroke="currentColor" /></svg></button>
              <button aria-label="Maximieren"><svg viewBox="0 0 10 10" width="10" height="10"><path d="M.5.5h9v9h-9z" stroke="currentColor" fill="none" /></svg></button>
              <button aria-label="Schließen"><svg viewBox="0 0 10 10" width="10" height="10"><path d="m0 0 10 10M10 0 0 10" stroke="currentColor" /></svg></button>
            </div>
          </header>
          <div className="flex h-[22px] items-center bg-[#f5f5f6]">
            <nav className="flex gap-[17px] pl-[14px]">
              {["Datei", "Verbindung", "Fenster", "Steuerungsfenster", "Einstellungen", "Hilfe"].map((m) => (
                <button key={m}>{m}</button>
              ))}
            </nav>
            <button className="ml-auto flex items-center gap-px pr-[12px]"><Icon name="net" size={15} />Netz</button>
            <div className="flex h-[15px] w-[263px] border border-r-0 border-[#b4b4b4] bg-white leading-[13px]">
              <span className="flex flex-1 whitespace-nowrap border-r border-[#b4b4b4]"><span className="mr-px w-[18px] bg-[#ff0000]" />22 Msg/s</span>
              <span className="flex-1 border-r border-[#b4b4b4] text-center">14.56 kB/s</span>
              <span className="flex-1 text-center">0 DMX/s</span>
            </div>
          </div>
          <main className="flex flex-1">
            <SideBar />
            <div className="flex min-w-0 flex-1 flex-col gap-[6px] pb-[5px] pl-[7px] pr-[6px] pt-[5px]">
              <div className="flex flex-1 gap-[6px]">
                <Explorer />
                <StageView />
                <DeviceControl />
              </div>
              <div className="grid h-[197px] grid-cols-[227fr_214fr_223fr_247fr_366fr] gap-[6px]">
                <div className="flex min-w-0"><Intensity /></div>
                <div className="flex min-w-0"><ColorPanel /></div>
                <div className="flex min-w-0"><PositionPanel /></div>
                <div className="flex min-w-0"><GoboPanel /></div>
                <Effects />
              </div>
            </div>
          </main>
          <footer className="flex h-[25px] items-center border-t border-white bg-[#f7f7f7] pl-[23px] pr-px">
            <span className="h-[15px] w-px bg-[#d8d8d8]" />
            <div className="ml-auto flex items-center gap-[5px]">
              <Icon name="save" size={15} />
              <Icon name="server" size={15} />
              <Icon name="search" size={15} />
              <Icon name="serverOk" size={15} />
              <span className="-ml-[4px]">(3)</span>
              <svg viewBox="0 0 11 11" width="11" height="11" aria-hidden="true" className="mt-[10px]">
                <path d="M8 0h2v2H8zM8 4h2v2H8zM8 8h2v2H8zM4 4h2v2H4zM4 8h2v2H4zM0 8h2v2H0z" fill="#b4b4b4" />
              </svg>
            </div>
          </footer>
        </div>
      </div>
      {CALLOUTS.map(([n, pos]) => (
        <span key={n} className={"pointer-events-none absolute flex size-[64px] items-center justify-center rounded-full border-[6px] border-[#ed7d31] pt-[2px] font-['Lato',sans-serif] text-[32px] font-black leading-none text-[#ed7d31] " + pos}>
          {n}
        </span>
      ))}
    </div>
  );
}
